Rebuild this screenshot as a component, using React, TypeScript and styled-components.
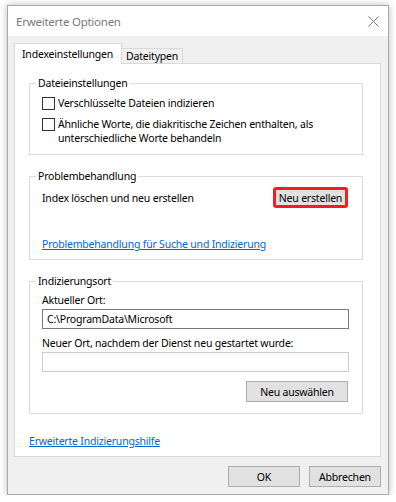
import * as React from 'react';
import styled, { createGlobalStyle } from 'styled-components';

const GlobalStyle = createGlobalStyle`
  html, body {
    margin: 0;
    padding: 0;
    background: #ffffff;
  }
  body {
    font-family: 'Noto Sans', 'Segoe UI', sans-serif;
    font-size: 10.5px;
    letter-spacing: -0.2px;
    color: #000000;
  }
`;

const Window = styled.div`
  box-sizing: border-box;
  margin: 5px 0 0 7px;
  width: 382px;
  height: 490px;
  border: 1px solid #a9a9a9;
  box-shadow: 0 0 7px rgba(0, 0, 0, 0.28);
  background: #f0f0f0;
  display: flex;
  flex-direction: column;
`;

const TitleBar = styled.div`
  height: 30px;
  background: #ffffff;
  display: flex;
  align-items: center;
  justify-content: space-between;
  padding: 0 9px 0 8px;
`;

const Title = styled.span`
  font-size: 11.5px;
  letter-spacing: -0.25px;
  color: #7a7a7a;
`;

const CloseIcon = () => (
  <svg width="11" height="11" viewBox="0 0 11 11">
    <path d="M0.5 0.5 L10.5 10.5 M10.5 0.5 L0.5 10.5" stroke="#7a7a7a" strokeWidth="1" fill="none" />
  </svg>
);

const Body = styled.div`
  flex: 1;
  padding: 7px 7px 0 6px;
  display: flex;
  flex-direction: column;
`;

const TabRow = styled.div`
  display: flex;
  align-items: flex-end;
  height: 21px;
  margin-bottom: -1px;
  position: relative;
  z-index: 1;
`;

const Tab = styled.div<{ $active?: boolean }>`
  box-sizing: border-box;
  height: ${p => (p.$active ? '21px' : '16px')};
  padding: ${p => (p.$active ? '0 8px 0 7px' : '0 4px 1px 4px')};
  display: flex;
  align-items: center;
  white-space: nowrap;
  border: 1px solid #d9d9d9;
  border-bottom: ${p => (p.$active ? 'none' : '1px solid #d9d9d9')};
  border-left: ${p => (p.$active ? '1px solid #d9d9d9' : 'none')};
  background: ${p => (p.$active ? '#ffffff' : '#f0f0f0')};
`;

const Panel = styled.div`
  box-sizing: border-box;
  height: 394px;
  background: #ffffff;
  border: 1px solid #d9d9d9;
  padding: 19px 17px 0 14px;
  display: flex;
  flex-direction: column;
  gap: 21px;
`;

const Group = styled.div<{ $pt: number; $pb: number }>`
  position: relative;
  border: 1px solid #dcdcdc;
  padding: ${p => p.$pt}px 13px ${p => p.$pb}px 12px;
  display: flex;
  flex-direction: column;
`;

const Legend = styled.span`
  position: absolute;
  top: -8px;
  left: 6px;
  padding: 0 2px;
  background: #ffffff;
  line-height: 14px;
`;

const CheckRow = styled.label<{ $mt?: number }>`
  display: flex;
  align-items: flex-start;
  gap: 3px;
  line-height: 14px;
  margin-top: ${p => p.$mt ?? 0}px;
`;

const Box = styled.span`
  box-sizing: border-box;
  flex: none;
  width: 13px;
  height: 13px;
  margin-top: 1px;
  border: 1px solid #333333;
  background: #ffffff;
`;

const Text = styled.span<{ $mt?: number }>`
  display: block;
  line-height: 14px;
  margin-top: ${p => p.$mt ?? 0}px;
`;

const ActionRow = styled.div`
  display: flex;
  align-items: center;
  justify-content: space-between;
  padding-right: 1px;
`;

const Button = styled.button<{ $w: number; $highlight?: boolean }>`
  box-sizing: border-box;
  width: ${p => p.$w}px;
  height: 21px;
  padding: 0;
  white-space: nowrap;
  font-family: inherit;
  font-size: 10.5px;
  letter-spacing: -0.2px;
  color: #000000;
  background: #e1e1e1;
  border: ${p => (p.$highlight ? '3px solid #ff1a1a' : '1px solid #adadad')};
  border-radius: ${p => (p.$highlight ? '3px' : '0')};
`;

const Link = styled.a<{ $mt?: number }>`
  display: block;
  line-height: 14px;
  color: #0066cc;
  text-decoration: underline;
  margin-top: ${p => p.$mt ?? 0}px;
`;

const Field = styled.div<{ $disabled?: boolean }>`
  box-sizing: border-box;
  height: 20px;
  margin-top: 2px;
  border: 1px solid ${p => (p.$disabled ? '#cccccc' : '#7a7a7a')};
  background: #ffffff;
  padding: 0 4px;
  display: flex;
  align-items: center;
`;

const RightAlign = styled.div`
  display: flex;
  justify-content: flex-end;
  margin-top: 9px;
  padding-right: 1px;
`;

const Footer = styled.div`
  display: flex;
  justify-content: flex-end;
  gap: 9px;
  padding-top: 9px;
`;

const App = () => (
  <>
    <GlobalStyle />
    <Window>
      <TitleBar>
        <Title>Erweiterte Optionen</Title>
        <CloseIcon />
      </TitleBar>
      <Body>
        <TabRow>
          <Tab $active>Indexeinstellungen</Tab>
          <Tab>Dateitypen</Tab>
        </TabRow>
        <Panel>
          <Group $pt={12} $pb={9}>
            <Legend>Dateieinstellungen</Legend>
            <CheckRow>
              <Box />
              <span>Verschlüsselte Dateien indizieren</span>
            </CheckRow>
            <CheckRow $mt={7}>
              <Box />
              <span>
                Ähnliche Worte, die diakritische Zeichen enthalten, als
                <br />
                unterschiedliche Worte behandeln
              </span>
            </CheckRow>
          </Group>
          <Group $pt={10} $pb={8}>
            <Legend>Problembehandlung</Legend>
            <ActionRow>
              <Text>Index löschen und neu erstellen</Text>
              <Button $w={75} $highlight>Neu erstellen</Button>
            </ActionRow>
            <Link $mt={29}>Problembehandlung für Suche und Indizierung</Link>
          </Group>
          <Group $pt={11} $pb={11}>
            <Legend>Indizierungsort</Legend>
            <Text>Aktueller Ort:</Text>
            <Field>C:\ProgramData\Microsoft</Field>
            <Text $mt={7}>Neuer Ort, nachdem der Dienst neu gestartet wurde:</Text>
            <Field $disabled />
            <RightAlign>
              <Button $w={102}>Neu auswählen</Button>
            </RightAlign>
          </Group>
          <Link $mt={-1}>Erweiterte Indizierungshilfe</Link>
        </Panel>
        <Footer>
          <Button $w={72}>OK</Button>
          <Button $w={72}>Abbrechen</Button>
        </Footer>
      </Body>
    </Window>
  </>
);

export default App;
